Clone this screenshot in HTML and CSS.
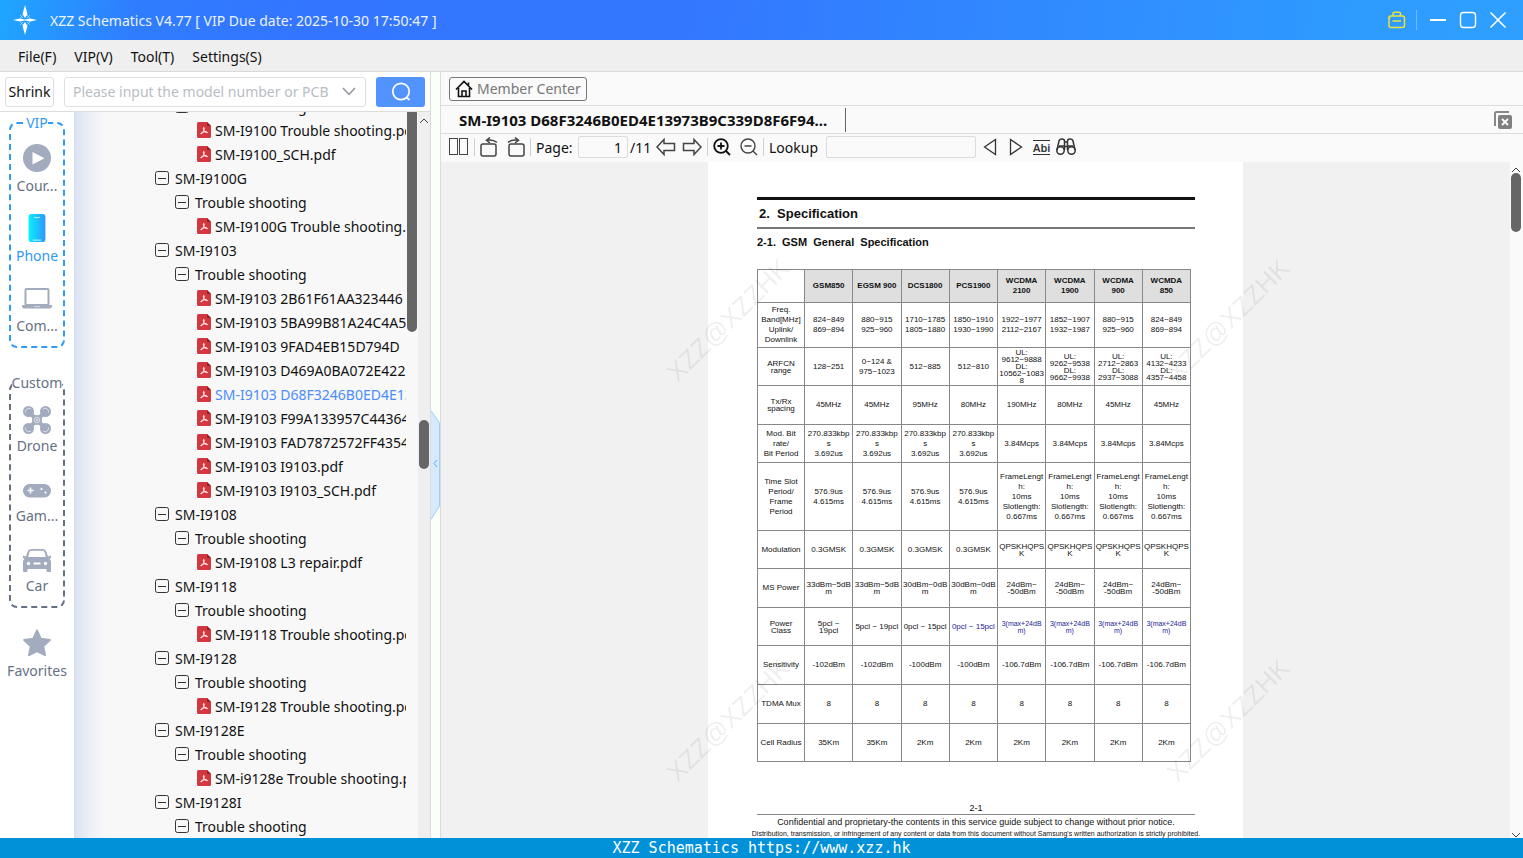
FILE: index.html
```html
<!DOCTYPE html>
<html lang="en">
<head>
  <meta charset="UTF-8">
  <title>XZZ Schematics</title>
  <link rel="stylesheet" href="styles.css">
</head>
<body>
  <svg class="symbols" aria-hidden="true">
    <symbol id="pdf" viewBox="0 0 14 16">
      <path d="M1.500 0H10L14 4V14.500Q14 16 12.500 16H1.500Q0 16 0 14.500V1.500Q0 0 1.500 0Z" fill="#d4373e"/>
      <path d="M10 0L14 4H10Z" fill="#8f1d22"/>
      <path d="M6.500 5.500C7.500 5 7.300 7 6.800 8.300C6.200 10 5 12 4 12C3 11.600 5 10.300 7 9.900C9 9.400 10.700 9.800 10.500 10.600C9.800 11.200 7.500 9.700 6.900 8.300C6.400 7.200 6 6 6.500 5.500Z" fill="none" stroke="#fff"/>
    </symbol>
    <symbol id="minus" viewBox="0 0 14 14">
      <rect x=".5" y=".5" width="13" height="13" rx="2" fill="none" stroke="#333"/>
      <path d="M3 7.500H11" stroke="#333"/>
    </symbol>
    <symbol id="up" viewBox="0 0 10 6">
      <path d="M1 5L5 1L9 5" fill="none" stroke="#444"/>
    </symbol>
    <symbol id="down" viewBox="0 0 10 6">
      <path d="M1 1L5 5L9 1" fill="none" stroke="#444"/>
    </symbol>
  </svg>

  <div class="app">
    <header class="title-bar">
      <svg class="logo" viewBox="0 0 26 30">
        <g fill="none" stroke="#9fe0ff" stroke-width=".8">
          <circle cx="13" cy="15" r="5" stroke-dasharray="5 2.850"/>
          <path d="M8 10L11 13M18 10L15 13M8 20L11 17M18 20L15 17"/>
        </g>
        <path d="M13 0L15.500 9L13 13L10.500 9ZM13 30L15.500 21L13 17L10.500 21Z" fill="#fff"/>
        <path d="M1 15L8 13.500L13 14.500L18 13.500L25 15L18 16.500L13 15.500L8 16.500Z" fill="#fff"/>
      </svg>
      <h1>XZZ Schematics V4.77 [ VIP Due date: 2025-10-30 17:50:47 ]</h1>
      <button class="bag" aria-label="Toolbox">
        <svg viewBox="0 0 18 18" width="18" height="18" fill="none" stroke="#e9e13c" stroke-width="1.500">
          <rect x="1" y="5" width="15.500" height="11.500" rx="2"/>
          <path d="M1.500 8V6M5 5V2.500Q5 1.200 6.500 1.200H11Q12.500 1.200 12.500 2.500V5M4.500 10H13"/>
        </svg>
      </button>
      <span class="divider"></span>
      <button aria-label="Minimize"><svg viewBox="0 0 18 18" width="18" height="18"><path d="M1 9H17" stroke="#fff" stroke-width="2"/></svg></button>
      <button aria-label="Maximize"><svg viewBox="0 0 18 18" width="18" height="18"><rect x="1.500" y="1.500" width="15" height="15" rx="3" fill="none" stroke="#fff" stroke-width="1.400"/></svg></button>
      <button aria-label="Close"><svg viewBox="0 0 18 18" width="18" height="18"><path d="M1.500 1.500L16.500 16.500M16.500 1.500L1.500 16.500" stroke="#fff" stroke-width="1.600"/></svg></button>
    </header>

    <nav class="menu">
      <button>File(F)</button>
      <button>VIP(V)</button>
      <button>Tool(T)</button>
      <button>Settings(S)</button>
    </nav>

    <main class="main">
      <section class="left">
        <div class="search-bar">
          <button class="shrink">Shrink</button>
          <div class="combo">
            <input type="text" aria-label="Model number" placeholder="Please input the model number or PCB">
            <button aria-label="History"><svg viewBox="0 0 14 9" width="14" height="9"><path d="M1 1L7 7.500L13 1" fill="none" stroke="#909399" stroke-width="1.500"/></svg></button>
          </div>
          <button class="search" aria-label="Search">
            <svg viewBox="0 0 20 20" width="20" height="20" fill="none" stroke="#fff" stroke-width="1.700"><circle cx="10" cy="9.500" r="8.200"/><path d="M15 15L18.500 18"/></svg>
          </button>
        </div>

        <div class="browser">
          <aside class="sidebar">
            <fieldset class="group vip">
              <legend>VIP</legend>
              <button class="category">
                <svg viewBox="0 0 28 28"><circle cx="14" cy="14" r="14" fill="#a3abbf"/><path d="M9.500 8V20.500L21.500 14.200Z" fill="#fff"/></svg>
                Cour...
              </button>
              <button class="category active">
                <svg viewBox="0 0 28 30">
                  <defs><linearGradient id="glow"><stop offset="0" stop-color="#06efff"/><stop offset="1" stop-color="#2f96ff"/></linearGradient></defs>
                  <rect x="5" width="18" height="30" rx="3" fill="url(#glow)"/>
                  <path d="M11 3.500Q14 4.500 17 3.500M9.500 28H18.500" stroke="#d8f7ff" fill="none"/>
                </svg>
                Phone
              </button>
              <button class="category">
                <svg viewBox="0 0 30 28"><rect x="3.500" y="5" width="23" height="16" rx="1" fill="none" stroke="#a3abbf" stroke-width="2"/><path d="M0 21H11L12 22.500H18L19 21H30Q30 24.500 28 24.500H2Q0 24.500 0 21Z" fill="#a3abbf"/></svg>
                Com...
              </button>
            </fieldset>
            <fieldset class="group custom">
              <legend>Custom</legend>
              <button class="category">
                <svg viewBox="0 0 28 28">
                  <g fill="#a3abbf">
                    <circle cx="5.500" cy="5.500" r="5.500"/><circle cx="22.500" cy="5.500" r="5.500"/><circle cx="5.500" cy="22.500" r="5.500"/><circle cx="22.500" cy="22.500" r="5.500"/>
                    <circle cx="14" cy="14" r="5"/>
                  </g>
                  <path d="M5.500 5.500L22.500 22.500M22.500 5.500L5.500 22.500" stroke="#a3abbf" stroke-width="4"/>
                  <g fill="none" stroke="#fff" stroke-width=".6">
                    <path d="M2.500 6.500A3.500 3.500 0 0 1 8 3M20 3A3.500 3.500 0 0 1 25.500 6.500M2.500 21.500A3.500 3.500 0 0 0 8 25M20 25A3.500 3.500 0 0 0 25.500 21.500"/>
                    <circle cx="14" cy="14" r="2.800"/><path d="M14 12.500V15.500M12.500 14H15.500"/>
                  </g>
                </svg>
                Drone
              </button>
              <button class="category">
                <svg viewBox="0 0 28 28">
                  <rect y="8" width="28" height="13.500" rx="6.500" fill="#a3abbf"/>
                  <path d="M4.500 14.500H10.500M7.500 11.500V17.500" stroke="#fff" stroke-width="1.600"/>
                  <circle cx="18.500" cy="13" r="1.100" fill="#fff"/><circle cx="22.500" cy="16.500" r="1.100" fill="#fff"/>
                </svg>
                Gam...
              </button>
              <button class="category">
                <svg viewBox="0 0 28 28">
                  <path d="M8 3H20Q22.500 3 23.300 5.500L25 10.500L28 9.500V12L26.500 13Q28 14 28 16V25Q28 26 27 26H24.500Q23.500 26 23.500 25V23H4.500V25Q4.500 26 3.500 26H1Q0 26 0 25V16Q0 14 1.500 13L0 12V9.500L3 10.500L4.700 5.500Q5.500 3 8 3Z" fill="#a3abbf"/>
                  <path d="M8.500 4.800H19.500Q21 4.800 21.500 6L22.800 11H5.200L6.500 6Q7 4.800 8.500 4.800Z" fill="#fff"/>
                  <path d="M10.500 17.500H17.500" stroke="#fff" stroke-width="2"/>
                  <circle cx="5.500" cy="17.500" r="1.700" fill="#fff"/><circle cx="22.500" cy="17.500" r="1.700" fill="#fff"/>
                </svg>
                Car
              </button>
            </fieldset>
            <button class="category favorites">
              <svg viewBox="0 0 28 28"><path d="M14 1.500L17.800 9.800L26.800 11L20.200 17.200L22 26.200L14 22L6 26.200L7.800 17.200L1.200 11L10.200 9.800Z" fill="#a3abbf" stroke="#a3abbf" stroke-width="2" stroke-linejoin="round"/></svg>
              Favorites
            </button>
          </aside>

          <div class="tree-wrap">
            <ul class="tree">
              <li class="folder"><button aria-label="Collapse"><svg><use href="#minus"/></svg></button>Trouble shooting</li>
              <li class="file"><svg><use href="#pdf"/></svg>SM-I9100 Trouble shooting.pdf</li>
              <li class="file"><svg><use href="#pdf"/></svg>SM-I9100_SCH.pdf</li>
              <li class="model"><button aria-label="Collapse"><svg><use href="#minus"/></svg></button>SM-I9100G</li>
              <li class="folder"><button aria-label="Collapse"><svg><use href="#minus"/></svg></button>Trouble shooting</li>
              <li class="file"><svg><use href="#pdf"/></svg>SM-I9100G Trouble shooting.pdf</li>
              <li class="model"><button aria-label="Collapse"><svg><use href="#minus"/></svg></button>SM-I9103</li>
              <li class="folder"><button aria-label="Collapse"><svg><use href="#minus"/></svg></button>Trouble shooting</li>
              <li class="file"><svg><use href="#pdf"/></svg>SM-I9103 2B61F61AA323446</li>
              <li class="file"><svg><use href="#pdf"/></svg>SM-I9103 5BA99B81A24C4A5</li>
              <li class="file"><svg><use href="#pdf"/></svg>SM-I9103 9FAD4EB15D794D</li>
              <li class="file"><svg><use href="#pdf"/></svg>SM-I9103 D469A0BA072E422</li>
              <li class="file selected"><svg><use href="#pdf"/></svg>SM-I9103 D68F3246B0ED4E13973B9C339D8F6F94</li>
              <li class="file"><svg><use href="#pdf"/></svg>SM-I9103 F99A133957C44364</li>
              <li class="file"><svg><use href="#pdf"/></svg>SM-I9103 FAD7872572FF4354</li>
              <li class="file"><svg><use href="#pdf"/></svg>SM-I9103 I9103.pdf</li>
              <li class="file"><svg><use href="#pdf"/></svg>SM-I9103 I9103_SCH.pdf</li>
              <li class="model"><button aria-label="Collapse"><svg><use href="#minus"/></svg></button>SM-I9108</li>
              <li class="folder"><button aria-label="Collapse"><svg><use href="#minus"/></svg></button>Trouble shooting</li>
              <li class="file"><svg><use href="#pdf"/></svg>SM-I9108 L3 repair.pdf</li>
              <li class="model"><button aria-label="Collapse"><svg><use href="#minus"/></svg></button>SM-I9118</li>
              <li class="folder"><button aria-label="Collapse"><svg><use href="#minus"/></svg></button>Trouble shooting</li>
              <li class="file"><svg><use href="#pdf"/></svg>SM-I9118 Trouble shooting.pdf</li>
              <li class="model"><button aria-label="Collapse"><svg><use href="#minus"/></svg></button>SM-I9128</li>
              <li class="folder"><button aria-label="Collapse"><svg><use href="#minus"/></svg></button>Trouble shooting</li>
              <li class="file"><svg><use href="#pdf"/></svg>SM-I9128 Trouble shooting.pdf</li>
              <li class="model"><button aria-label="Collapse"><svg><use href="#minus"/></svg></button>SM-I9128E</li>
              <li class="folder"><button aria-label="Collapse"><svg><use href="#minus"/></svg></button>Trouble shooting</li>
              <li class="file"><svg><use href="#pdf"/></svg>SM-i9128e Trouble shooting.pdf</li>
              <li class="model"><button aria-label="Collapse"><svg><use href="#minus"/></svg></button>SM-I9128I</li>
              <li class="folder"><button aria-label="Collapse"><svg><use href="#minus"/></svg></button>Trouble shooting</li>
            </ul>
            <div class="inner-scroll"><span></span></div>
            <div class="outer-scroll"><svg class="arrow"><use href="#up"/></svg><span></span></div>
          </div>
        </div>
      </section>

      <div class="splitter">
        <button aria-label="Hide panel">
          <svg viewBox="0 0 10 110" width="10" height="110">
            <path d="M0 .5L8.500 13V96L0 109.500" fill="#d6e9fd" stroke="#9fcff8"/>
            <path d="M6 50L3 53.500L6 57" fill="none" stroke="#5aaef5"/>
          </svg>
        </button>
      </div>

      <section class="viewer">
        <div class="member-row">
          <button class="member">
            <svg viewBox="0 0 18 18" width="18" height="18" fill="none" stroke="#111" stroke-width="1.600"><path d="M1 9.500L9 1.500L17 9.500M3.500 8V16.500H14.500V8M7 16V11H11V16M13.500 5V2.500"/></svg>
            Member Center
          </button>
        </div>
        <div class="tab-row">
          <button class="tab">SM-I9103 D68F3246B0ED4E13973B9C339D8F6F94...</button>
          <button class="close-all" aria-label="Close all">
            <svg viewBox="0 0 18 18" width="18" height="18"><path d="M1 15V2.500Q1 1 2.500 1H15" fill="none" stroke="#888" stroke-width="2"/><rect x="4" y="4" width="14" height="14" rx="2" fill="#808080"/><path d="M8 8L14 14M14 8L8 14" stroke="#fff" stroke-width="1.800"/></svg>
          </button>
        </div>
        <div class="toolbar">
          <button aria-label="Two pages"><svg viewBox="0 0 20 18" width="20" height="18" fill="none" stroke="#444"><rect x=".5" y=".5" width="8" height="16"/><rect x="10.500" y=".5" width="8" height="16"/></svg></button>
          <span class="sep"></span>
          <button aria-label="Rotate left"><svg viewBox="0 0 18 20" width="18" height="20" fill="none" stroke="#444" stroke-width="1.500"><rect x="1" y="7" width="15" height="12" rx="2"/><path d="M17 5.500Q13 2 7 3.200M10 .5L6.500 3.300L10 6"/></svg></button>
          <button class="second" aria-label="Rotate right"><svg viewBox="0 0 18 20" width="18" height="20" fill="none" stroke="#444" stroke-width="1.500"><rect x="2" y="7" width="15" height="12" rx="2"/><path d="M1 5.500Q5 2 11 3.200M8 .5L11.500 3.300L8 6"/></svg></button>
          <span class="sep"></span>
          <label class="page-label" for="page">Page:</label>
          <input id="page" class="page-input" type="text" value="1">
          <span class="total">/11</span>
          <button aria-label="Previous page"><svg viewBox="0 0 20 18" width="20" height="18" fill="none" stroke="#444" stroke-width="1.500"><path d="M1 9L8 1.500V5.500H18.500V12.500H8V16.500Z"/></svg></button>
          <button class="next" aria-label="Next page"><svg viewBox="0 0 20 18" width="20" height="18" fill="none" stroke="#444" stroke-width="1.500"><path d="M19 9L12 1.500V5.500H1.500V12.500H12V16.500Z"/></svg></button>
          <span class="sep"></span>
          <button aria-label="Zoom in"><svg viewBox="0 0 18 18" width="18" height="18" fill="none" stroke="#111" stroke-width="1.800"><circle cx="8" cy="8" r="6.800"/><path d="M13 13L17 17M4.500 8H11.500M8 4.500V11.500"/></svg></button>
          <button class="second" aria-label="Zoom out"><svg viewBox="0 0 18 18" width="18" height="18" fill="none" stroke="#444" stroke-width="1.400"><circle cx="8" cy="8" r="7"/><path d="M13 13L17 17M4.500 8H11.500"/></svg></button>
          <span class="sep"></span>
          <label class="lookup-label" for="lookup">Lookup</label>
          <input id="lookup" class="lookup-input" type="text">
          <button aria-label="Find previous"><svg viewBox="0 0 14 18" width="14" height="18" fill="none" stroke="#333" stroke-width="1.300"><path d="M12.500 1.500V16.500L1.500 9Z"/></svg></button>
          <button class="find-next" aria-label="Find next"><svg viewBox="0 0 14 18" width="14" height="18" fill="none" stroke="#333" stroke-width="1.300"><path d="M1.500 1.500V16.500L12.500 9Z"/></svg></button>
          <button class="abi" aria-label="Whole word">Abi</button>
          <button aria-label="Search document"><svg viewBox="0 0 20 18" width="20" height="18" fill="none" stroke="#333" stroke-width="1.500"><circle cx="4.500" cy="12.500" r="3.700"/><circle cx="15.500" cy="12.500" r="3.700"/><path d="M1 12L3 3Q3.500 1 6 1Q8.500 1 8.500 3V12M19 12L17 3Q16.500 1 14 1Q11.500 1 11.500 3V12M8.500 4H11.500M8.500 8.500H11.500M3 8H8M12 8H17"/></svg></button>
        </div>

        <div class="document">
          <div class="canvas">
            <article class="page">
              <h2>2.&nbsp; Specification</h2>
              <h3>2-1.&nbsp; GSM&nbsp; General&nbsp; Specification</h3>
              <table>
                <thead>
                  <tr class="head"><td></td><th>GSM850</th><th>EGSM 900</th><th>DCS1800</th><th>PCS1900</th><th>WCDMA<br>2100</th><th>WCDMA<br>1900</th><th>WCDMA<br>900</th><th>WCMDA<br>850</th></tr>
                </thead>
                <tbody>
                  <tr class="freq"><td>Freq.<br>Band[MHz]<br>Uplink/<br>Downlink</td><td>824~849<br>869~894</td><td>880~915<br>925~960</td><td>1710~1785<br>1805~1880</td><td>1850~1910<br>1930~1990</td><td>1922~1977<br>2112~2167</td><td>1852~1907<br>1932~1987</td><td>880~915<br>925~960</td><td>824~849<br>869~894</td></tr>
                  <tr class="low"><td class="tight">ARFCN<br>range</td><td>128~251</td><td>0~124 &amp;<br>975~1023</td><td>512~885</td><td>512~810</td><td class="tight">UL:<br>9612~9888<br>DL:<br>10562~1083<br>8</td><td class="tight">UL:<br>9262~9538<br>DL:<br>9662~9938</td><td class="tight">UL:<br>2712~2863<br>DL:<br>2937~3088</td><td class="tight">UL:<br>4132~4233<br>DL:<br>4357~4458</td></tr>
                  <tr><td class="tight">Tx/Rx<br>spacing</td><td>45MHz</td><td>45MHz</td><td>95MHz</td><td>80MHz</td><td>190MHz</td><td>80MHz</td><td>45MHz</td><td>45MHz</td></tr>
                  <tr class="low"><td>Mod. Bit<br>rate/<br>Bit Period</td><td>270.833kbp<br>s<br>3.692us</td><td>270.833kbp<br>s<br>3.692us</td><td>270.833kbp<br>s<br>3.692us</td><td>270.833kbp<br>s<br>3.692us</td><td>3.84Mcps</td><td>3.84Mcps</td><td>3.84Mcps</td><td>3.84Mcps</td></tr>
                  <tr class="slot"><td>Time Slot<br>Period/<br>Frame<br>Period</td><td>576.9us<br>4.615ms</td><td>576.9us<br>4.615ms</td><td>576.9us<br>4.615ms</td><td>576.9us<br>4.615ms</td><td>FrameLengt<br>h:<br>10ms<br>Slotlength:<br>0.667ms</td><td>FrameLengt<br>h:<br>10ms<br>Slotlength:<br>0.667ms</td><td>FrameLengt<br>h:<br>10ms<br>Slotlength:<br>0.667ms</td><td>FrameLengt<br>h:<br>10ms<br>Slotlength:<br>0.667ms</td></tr>
                  <tr class="low"><td>Modulation</td><td>0.3GMSK</td><td>0.3GMSK</td><td>0.3GMSK</td><td>0.3GMSK</td><td class="tight">QPSKHQPS<br>K</td><td class="tight">QPSKHQPS<br>K</td><td class="tight">QPSKHQPS<br>K</td><td class="tight">QPSKHQPS<br>K</td></tr>
                  <tr><td>MS Power</td><td class="tight">33dBm~5dB<br>m</td><td class="tight">33dBm~5dB<br>m</td><td class="tight">30dBm~0dB<br>m</td><td class="tight">30dBm~0dB<br>m</td><td class="tight">24dBm~<br>-50dBm</td><td class="tight">24dBm~<br>-50dBm</td><td class="tight">24dBm~<br>-50dBm</td><td class="tight">24dBm~<br>-50dBm</td></tr>
                  <tr class="low"><td class="tight">Power<br>Class</td><td class="tight">5pcl ~<br>19pcl</td><td>5pcl ~ 19pcl</td><td>0pcl ~ 15pcl</td><td class="blue">0pcl ~ 15pcl</td><td class="tight blue small">3(max+24dB<br>m)</td><td class="tight blue small">3(max+24dB<br>m)</td><td class="tight blue small">3(max+24dB<br>m)</td><td class="tight blue small">3(max+24dB<br>m)</td></tr>
                  <tr><td>Sensitivity</td><td>-102dBm</td><td>-102dBm</td><td>-100dBm</td><td>-100dBm</td><td>-106.7dBm</td><td>-106.7dBm</td><td>-106.7dBm</td><td>-106.7dBm</td></tr>
                  <tr><td>TDMA Mux</td><td>8</td><td>8</td><td>8</td><td>8</td><td>8</td><td>8</td><td>8</td><td>8</td></tr>
                  <tr class="low"><td>Cell Radius</td><td>35Km</td><td>35Km</td><td>2Km</td><td>2Km</td><td>2Km</td><td>2Km</td><td>2Km</td><td>2Km</td></tr>
                </tbody>
              </table>
              <footer>
                <p class="page-number">2-1</p>
                <p class="notice">Confidential and proprietary-the contents in this service guide subject to change without prior notice.</p>
                <p class="fine">Distribution, transmission, or infringement of any content or data from this document without Samsung's written authorization is strictly prohibited.</p>
              </footer>
              <div class="watermarks">
                <span>XZZ@XZZHK</span>
                <span>XZZ@XZZHK</span>
                <span>XZZ@XZZHK</span>
                <span>XZZ@XZZHK</span>
              </div>
            </article>
          </div>
          <div class="doc-scroll">
            <svg class="arrow"><use href="#up"/></svg>
            <span></span>
            <svg class="arrow last"><use href="#down"/></svg>
          </div>
        </div>
      </section>
    </main>

    <footer class="status">XZZ Schematics https://www.xzz.hk</footer>
  </div>
</body>
</html>
```
FILE: styles.css
```css
* {
  box-sizing: border-box;
}

body {
  margin: 0;
  font-family: "Noto Sans", sans-serif;
  font-size: 14px;
  color: #111;
}

button,
input {
  font: inherit;
  color: inherit;
}

button {
  display: flex;
  align-items: center;
  justify-content: center;
  padding: 0;
  border: none;
  background: none;
  white-space: nowrap;
}

.symbols {
  position: absolute;
  width: 0;
  height: 0;
}

.app {
  display: flex;
  flex-direction: column;
  height: 100vh;
  overflow: hidden;
}

/* title bar */
.title-bar {
  display: flex;
  align-items: center;
  height: 40px;
  flex-shrink: 0;
  padding: 0 16px 0 12px;
  background: linear-gradient(100deg, #1fa6ff 0%, #2f7dff 9%, #3375ff 20%, #3377ff 45%, #2e9cff 90%, #2e9fff 100%);
}

.title-bar h1 {
  flex: 1;
  margin: 0 0 0 12px;
  font-size: 14px;
  font-weight: 400;
  color: #edf3ff;
}

.logo {
  width: 26px;
  height: 30px;
}

.title-bar button {
  margin-left: 12px;
}

.title-bar .divider {
  width: 1px;
  height: 20px;
  margin-left: 10px;
  background: #76b9ff;
}

/* menu */
.menu {
  display: flex;
  gap: 18px;
  height: 32px;
  flex-shrink: 0;
  padding: 1px 18px 0;
  background: #efefef;
  border-bottom: 1px solid #d9d9d9;
}

.main {
  display: flex;
  flex: 1;
  min-height: 0;
}

/* left panel */
.left {
  display: flex;
  flex-direction: column;
  width: 431px;
  flex-shrink: 0;
  border-right: 1px solid #dcdcdc;
}

.search-bar {
  display: flex;
  align-items: center;
  height: 40px;
  flex-shrink: 0;
  padding: 0 5px;
  border-bottom: 1px solid #dcdcdc;
}

.shrink {
  width: 49px;
  height: 30px;
  border: 1px solid #dcdfe6;
  border-radius: 3px;
}

.combo {
  display: flex;
  flex: 1;
  height: 30px;
  margin: 0 10px;
  padding: 0 9px 0 8px;
  border: 1px solid #dcdfe6;
  border-radius: 3px;
}

.combo input {
  flex: 1;
  min-width: 0;
  padding: 0;
  border: none;
  outline: none;
}

.combo input::placeholder {
  color: #b9bdc5;
}

.search {
  width: 49px;
  height: 30px;
  border-radius: 3px;
  background: #5393ff;
}

.browser {
  display: flex;
  flex: 1;
  min-height: 0;
}

.sidebar {
  width: 74px;
  flex-shrink: 0;
  padding-top: 2px;
  color: #667085;
}

.group {
  min-width: 0;
  width: 56px;
  margin: 0 9px 26px;
  padding: 4px 0 0;
  border: 2px dashed #667085;
  border-radius: 8px;
}

.group legend {
  margin: 0 auto;
  padding: 0;
  line-height: 18px;
}

.group.vip {
  border-color: #3199f8;
}

.vip legend,
.category.active {
  color: #3199f8;
}

.category {
  flex-direction: column;
  justify-content: flex-start;
  gap: 4px;
  width: 100%;
  height: 70px;
  padding-top: 8px;
  line-height: 20px;
}

.category svg {
  width: 30px;
  height: 28px;
}

.custom .category {
  padding-top: 10px;
  gap: 2px;
}

.favorites {
  margin-top: -13px;
}

/* file tree */
.tree-wrap {
  display: flex;
  flex: 1;
  min-width: 0;
  overflow: hidden;
  background: linear-gradient(90deg, #d8e0f0 0, #e9edf4 12px, #f8f8f8 32px);
}

.tree {
  flex: 1;
  min-width: 0;
  margin: -18px 0 0;
  padding: 0;
  list-style: none;
  overflow: hidden;
}

.tree li {
  display: flex;
  align-items: center;
  height: 24px;
  white-space: nowrap;
}

.tree svg {
  width: 14px;
  height: 14px;
  flex-shrink: 0;
}

.tree .model {
  padding-left: 81px;
  gap: 6px;
}

.tree .folder {
  padding-left: 101px;
  gap: 6px;
}

.tree .file {
  padding-left: 123px;
  gap: 4px;
}

.tree .file svg {
  height: 16px;
}

.tree .selected {
  color: #4a8cff;
}

.inner-scroll {
  width: 12px;
  padding-left: 1px;
}

.inner-scroll span {
  display: block;
  width: 10px;
  height: 220px;
  background: #666;
  border-radius: 0 0 5px 5px;
}

.outer-scroll {
  width: 12px;
  padding: 6px 1px 0;
  background: #efefef;
}

.arrow {
  display: block;
  width: 10px;
  height: 6px;
}

.outer-scroll span {
  display: block;
  height: 49px;
  margin-top: 296px;
  background: #666;
  border-radius: 5px;
}

.splitter {
  display: flex;
  align-items: center;
  width: 10px;
  flex-shrink: 0;
  padding-top: 20px;
  border-right: 1px solid #dcdcdc;
  background: #fafffa;
}

/* viewer */
.viewer {
  display: flex;
  flex-direction: column;
  flex: 1;
  min-width: 0;
  background: #fafafa;
}

.member-row,
.tab-row {
  display: flex;
  align-items: center;
  flex-shrink: 0;
  border-bottom: 1px solid #dcdcdc;
}

.member-row {
  height: 34px;
  padding-left: 8px;
}

.member {
  gap: 4px;
  height: 24px;
  padding: 0 5px;
  border: 1px solid #777;
  border-radius: 3px;
  color: #777;
}

.tab-row {
  justify-content: space-between;
  height: 28px;
  padding: 0 11px 0 7px;
}

.tab {
  height: 24px;
  padding: 0 18px 0 11px;
  border-right: 1px solid #666;
  font-size: 15px;
  font-weight: 700;
}

.toolbar {
  display: flex;
  align-items: center;
  height: 28px;
  flex-shrink: 0;
  padding: 0 0 2px 8px;
}

.sep {
  width: 1px;
  height: 18px;
  margin: 0 5px;
  background: #d0d0d0;
}

.toolbar .second {
  margin-left: 9px;
}

.toolbar .next {
  margin-left: 6px;
}

.page-label {
  width: 42px;
}

.toolbar input {
  height: 22px;
  border: 1px solid #dcdcdc;
  border-radius: 2px;
  background: #fafafa;
}

.page-input {
  width: 50px;
  padding: 0 5px;
  text-align: right;
}

.total {
  width: 26px;
  margin-left: 2px;
}

.lookup-label {
  width: 57px;
}

.lookup-input {
  width: 150px;
  margin-right: 7px;
}

.toolbar .find-next {
  margin: 0 10px 0 12px;
}

.toolbar .abi {
  height: 15px;
  margin-right: 6px;
  border: solid #333;
  border-width: 1px 0;
  font-size: 11px;
  font-weight: 600;
  color: #333;
}

.document {
  display: flex;
  flex: 1;
  min-height: 0;
}

.canvas {
  display: flex;
  justify-content: center;
  flex: 1;
  min-width: 0;
  overflow: hidden;
  background: #f1f1f1;
}

.doc-scroll {
  display: flex;
  flex-direction: column;
  width: 13px;
  padding: 5px 2px 0 1px;
}

.doc-scroll span {
  width: 10px;
  height: 59px;
  background: #666;
  border-radius: 5px;
}

.doc-scroll .last {
  margin-top: auto;
}

/* pdf page */
.page {
  position: relative;
  width: 535px;
  flex-shrink: 0;
  padding: 35px 48px 0 49px;
  background: #fff;
  font-family: "Liberation Sans", sans-serif;
}

.page h2 {
  margin: 0;
  padding-left: 2px;
  border-top: 3px solid #111;
  border-bottom: 2px solid #777;
  font-size: 13px;
  line-height: 27px;
}

.page h3 {
  margin: 5px 0 19px;
  font-size: 11px;
  line-height: 16px;
}

.page table {
  width: 434px;
  table-layout: fixed;
  border-collapse: collapse;
}

.page td,
.page th {
  height: 39px;
  padding: 0;
  border: 1px solid #888;
  text-align: center;
  font-size: 8px;
  line-height: 10px;
  white-space: nowrap;
}

.page th {
  background: #dfdfdf;
}

.page .head td,
.page .head th {
  height: 33px;
}

.page .head td {
  width: 47px;
}

.page .freq td {
  height: 45px;
}

.page .low td {
  height: 38px;
}

.page .slot td {
  height: 68px;
}

.page .tight {
  line-height: 7px;
}

.page .blue {
  color: #1c1c96;
}

.page .small {
  font-size: 7px;
}

.page footer {
  margin-top: 40px;
  text-align: center;
}

.page footer p {
  margin: 0;
  white-space: nowrap;
}

.page .page-number {
  font-size: 9px;
  line-height: 12px;
  border-bottom: 1px solid #888;
}

.page .notice {
  font-size: 9px;
  line-height: 15px;
}

.page .fine {
  margin: 0 -10px;
  font-size: 7px;
  line-height: 8px;
}

/* tiled diagonal stamps, laid over the page and its margins */
.watermarks {
  position: absolute;
  top: -42px;
  left: -230px;
  display: grid;
  grid-template-columns: 500px 500px;
  grid-template-rows: 400px 400px;
  place-items: center;
  font-size: 26px;
  color: rgba(0, 0, 0, 0.08);
  pointer-events: none;
}

.watermarks span {
  transform: rotate(-45deg);
}

.status {
  height: 20px;
  flex-shrink: 0;
  background: #0191d9;
  color: #fff;
  text-align: center;
  font-family: "DejaVu Sans Mono", monospace;
  font-size: 15px;
  line-height: 20px;
}
```
